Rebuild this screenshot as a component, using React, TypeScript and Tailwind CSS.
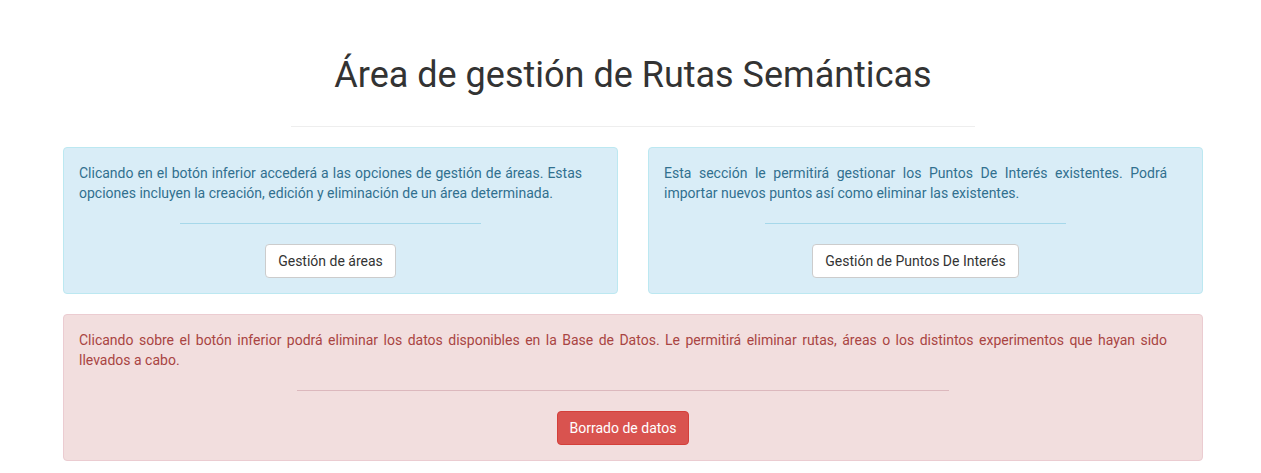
export default function App() {
  return (
    <div className="min-h-screen bg-white font-['Roboto',sans-serif] text-[14px] leading-[20px] text-[#333]">
      <div className="ml-[63px] w-[1140px]">
        {/* Header */}
        <h1 className="pt-[55px] text-center text-[36px] leading-[40px] font-normal text-[#333]">
          Área de gestión de Rutas Semánticas
        </h1>
        <hr className="mx-auto mt-[31px] mb-[20px] w-[60%] border-t border-[#eee]" />

        {/* Panels */}
        <div className="grid grid-cols-2 gap-[30px]">
          <div className="rounded-[4px] border border-[#bce8f1] bg-[#d9edf7] py-[15px] pl-[15px] pr-[35px] text-[#31708f]">
            <p className="text-justify">
              Clicando en el botón inferior accederá a las opciones de gestión de áreas. Estas opciones incluyen la creación, edición y eliminación de un área determinada.
            </p>
            <hr className="mx-auto my-[20px] w-[60%] border-t border-[#a6d8ea]" />
            <div className="flex justify-center">
              <button className="h-[34px] rounded-[4px] border border-[#ccc] bg-white px-[12px] text-[#333]">
                Gestión de áreas
              </button>
            </div>
          </div>
          <div className="rounded-[4px] border border-[#bce8f1] bg-[#d9edf7] py-[15px] pl-[15px] pr-[35px] text-[#31708f]">
            <p className="text-justify">
              Esta sección le permitirá gestionar los Puntos De Interés existentes. Podrá importar nuevos puntos así como eliminar las existentes.
            </p>
            <hr className="mx-auto my-[20px] w-[60%] border-t border-[#a6d8ea]" />
            <div className="flex justify-center">
              <button className="h-[34px] rounded-[4px] border border-[#ccc] bg-white px-[12px] text-[#333]">
                Gestión de Puntos De Interés
              </button>
            </div>
          </div>
        </div>

        <div className="mt-[20px] rounded-[4px] border border-[#ebccd1] bg-[#f2dede] py-[15px] pl-[15px] pr-[35px] text-[#a94442]">
          <p className="text-justify">
            Clicando sobre el botón inferior podrá eliminar los datos disponibles en la Base de Datos. Le permitirá eliminar rutas, áreas o los distintos experimentos que hayan sido llevados a cabo.
          </p>
          <hr className="mx-auto my-[20px] w-[60%] border-t border-[#dcb8bd]" />
          <div className="flex justify-center">
            <button className="h-[34px] rounded-[4px] border border-[#d43f3a] bg-[#d9534f] px-[12px] text-white">
              Borrado de datos
            </button>
          </div>
        </div>
      </div>
    </div>
  );
}
